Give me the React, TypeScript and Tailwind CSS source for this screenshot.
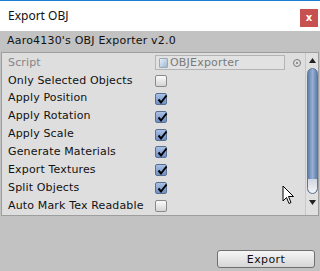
import React from 'react';

const rows: { label: string; checked: boolean }[] = [
  { label: 'Only Selected Objects', checked: false },
  { label: 'Apply Position', checked: true },
  { label: 'Apply Rotation', checked: true },
  { label: 'Apply Scale', checked: true },
  { label: 'Generate Materials', checked: true },
  { label: 'Export Textures', checked: true },
  { label: 'Split Objects', checked: true },
  { label: 'Auto Mark Tex Readable', checked: false },
];

function Checkbox({ checked }: { checked: boolean }) {
  if (!checked) {
    return (
      <div className="w-[12px] h-[12px] rounded-[2px] border border-[#8a8a8a] bg-gradient-to-b from-[#fbfbfb] to-[#d4d4d4]" />
    );
  }
  return (
    <div className="relative w-[12px] h-[12px] rounded-[2px] border border-[#5a6f90] bg-gradient-to-b from-[#a9c1e6] to-[#6f8fc4]">
      <svg className="absolute left-[1px] top-[0px]" width="11" height="11" viewBox="0 0 11 11">
        <path d="M1.5 5.5 L4 8.5 L9.5 1.5" fill="none" stroke="#000" strokeWidth="2" />
      </svg>
    </div>
  );
}

export default function App() {
  return (
    <div className="relative w-[320px] h-[271px] overflow-hidden bg-[#c2c2c2] flex flex-col font-['DejaVu_Sans',sans-serif] text-[11px] text-[#111]">
      <div className="h-px bg-[#1c7fd6]" />
      {/* Title bar */}
      <div className="h-[30px] bg-white flex items-start justify-between">
        <span className="pl-[8px] pt-[7px] text-[12px] font-['Noto_Sans',sans-serif] leading-[16px]">Export OBJ</span>
        <div className="mt-[8px] mr-[2px] w-[18px] h-[18px] bg-[#c75050] flex items-center justify-center text-white text-[10px] font-bold leading-none">
          x
        </div>
      </div>
      {/* Header */}
      <div className="h-[21px] flex items-center pl-[7px] tracking-[0.2px]">Aaro4130's OBJ Exporter v2.0</div>
      {/* Inspector panel */}
      <div className="mx-[1px] h-[164px] border border-[#9e9e9e] bg-[#dedede] flex">
        <div className="flex-1 flex flex-col pt-[1px]">
          <div className="h-[18px] flex items-center">
            <span className="w-[153px] pl-[6px] text-[#858585] tracking-[0.15px]">Script</span>
            <div className="w-[130px] h-[15px] border border-[#b4b4b4] bg-[#e2e2e2] flex items-center gap-[2px] pl-[3px] text-[#7a7a7a] tracking-[0.2px]">
              <div className="w-[9px] h-[10px] rounded-[1px] bg-gradient-to-br from-[#e8f0f6] to-[#9cb8cf] border border-[#9aa9b6]" />
              OBJExporter
            </div>
            <div className="ml-[8px] w-[8px] h-[8px] rounded-full border border-[#7a7a7a] flex items-center justify-center">
              <div className="w-[2px] h-[2px] rounded-full bg-[#7a7a7a]" />
            </div>
          </div>
          {rows.map((r) => (
            <div key={r.label} className="h-[18px] flex items-center">
              <span className="w-[153px] pl-[6px] tracking-[0.15px] whitespace-nowrap">{r.label}</span>
              <Checkbox checked={r.checked} />
            </div>
          ))}
        </div>
        {/* Scrollbar */}
        <div className="w-[13px] border-l border-[#c8c8c8] bg-[#e0e0e0] flex flex-col items-center">
          <svg className="mt-[5px]" width="7" height="5" viewBox="0 0 7 5">
            <path d="M3.5 0 L7 5 L0 5 Z" fill="#222" />
          </svg>
          <div className="mt-[5px] w-[11px] h-[126px] rounded-full border border-[#5f7699] bg-gradient-to-r from-[#5f7fae] via-[#97b0d4] to-[#5f7fae] flex flex-col justify-end overflow-hidden">
            <div className="h-[14px] bg-gradient-to-b from-[#cfd6df] to-[#f4f4f4] rounded-b-full" />
          </div>
          <svg className="mt-[6px]" width="7" height="5" viewBox="0 0 7 5">
            <path d="M0 0 L7 0 L3.5 5 Z" fill="#222" />
          </svg>
        </div>
      </div>
      {/* Footer */}
      <div className="flex-1 flex items-end justify-end pr-[5px] pb-[3px]">
        <button className="w-[98px] h-[18px] rounded-[3px] border border-[#707070] bg-gradient-to-b from-[#f6f6f6] to-[#d6d6d6] text-[11px] tracking-[0.4px] leading-none">
          Export
        </button>
      </div>
      {/* Mouse cursor */}
      <svg className="absolute left-[282px] top-[185px]" width="13" height="20" viewBox="0 0 13 20">
        <path d="M1 1 L1 16 L4.5 12.5 L7 18.5 L9 17.5 L6.5 11.5 L11.5 11.5 Z" fill="#fff" stroke="#000" strokeWidth="1" strokeLinejoin="round" />
      </svg>
    </div>
  );
}
